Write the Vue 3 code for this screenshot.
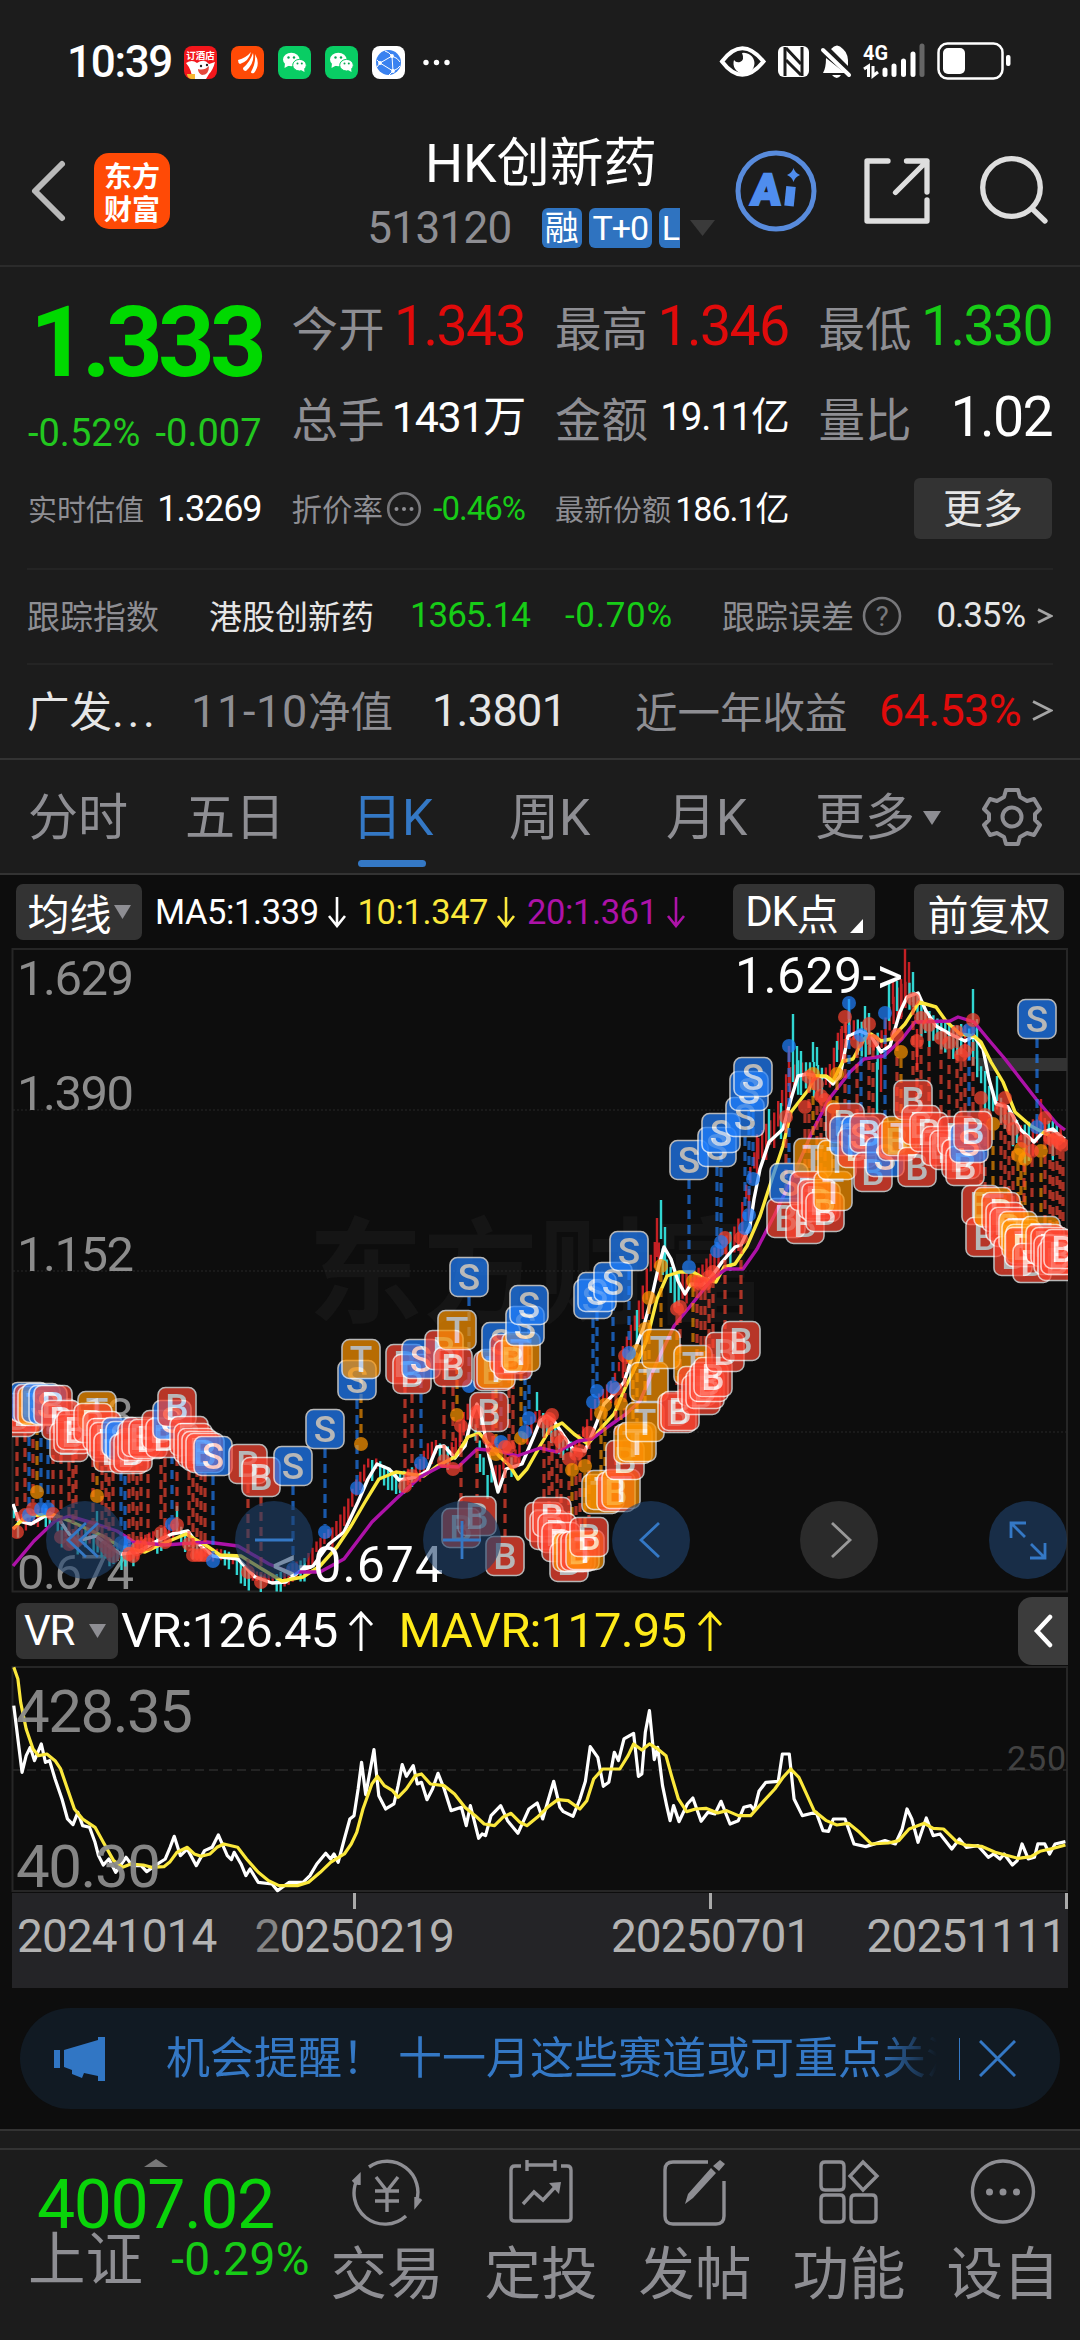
<template>
    <div class="quote-page">
        <!-- 系统状态栏 -->
        <div class="status-bar">
            <span class="clock num">10:39</span>
            <div class="app-icons">
                <svg viewBox="0 0 33 33">
                    <rect width="33" height="33" rx="8" fill="#f3161b" />
                    <path d="M2 17 Q8 13 13 17 Q20 12 25 18 L31 16 Q29 24 25 28 L22 33 H8 Q8 24 2 17" fill="#fff" />
                    <path d="M14 23 Q20 25 25 20 Q25 29 18 29 Q14 27 14 23" fill="#e5483c" />
                    <path d="M3 28 H11 V33 H7 Q3 32 3 28" fill="#f7b733" />
                    <circle cx="17" cy="20" r="1.2" fill="#222" />
                    <circle cx="23" cy="19" r="1.2" fill="#222" />
                    <text x="16.5" y="13" font-size="9.5" font-weight="700" text-anchor="middle" fill="#fff">订酒店</text>
                </svg>
                <svg viewBox="0 0 33 33">
                    <rect width="33" height="33" rx="8" fill="#ff4a06" />
                    <path d="M7 14 Q15 12 20 6 Q18 15 9 18 Q7 17 7 14 M12 22 Q19 16 22 7 Q24 17 15 25 Q12 25 12 22 M20 26 Q25 17 24 8 Q30 18 23 27 Q20 28 20 26" fill="#fff" />
                </svg>
                <svg v-for="n in 2" :key="n" viewBox="0 0 33 33">
                    <rect width="33" height="33" rx="8" fill="#09cd64" />
                    <ellipse cx="13.300" cy="13.500" rx="8.300" ry="6.800" fill="#fff" />
                    <path d="M7 17 L6.500 22 L12 19" fill="#fff" />
                    <ellipse cx="21.500" cy="19.200" rx="6.800" ry="5.800" fill="#fff" stroke="#09cd64" stroke-width="1" />
                    <path d="M23 24 L26.500 26 L26 22" fill="#fff" />
                    <g fill="#09a553">
                        <circle cx="10.500" cy="11.500" r="1.200" />
                        <circle cx="16" cy="11.500" r="1.200" />
                        <circle cx="19.500" cy="17.500" r="1" />
                        <circle cx="23.800" cy="17.500" r="1" />
                    </g>
                </svg>
                <svg viewBox="0 0 33 33">
                    <rect width="33" height="33" rx="8" fill="#fff" />
                    <circle cx="16.500" cy="16.500" r="12.500" fill="#3a82f0" />
                    <g stroke="#fff" stroke-width="1" fill="none">
                        <path d="M8 17 L20 10 L21 25 Z M20 10 Q17 6 13 5 M20 10 Q26 12 28 16 M21 25 Q26 23 28 20 M21 25 L17 29 M8 17 L5 14 M8 17 L5 21" />
                    </g>
                    <g fill="#fff">
                        <circle cx="8" cy="17" r="1.900" />
                        <circle cx="20" cy="10" r="1.900" />
                        <circle cx="21" cy="25" r="1.900" />
                    </g>
                </svg>
                <svg class="dots" viewBox="0 0 33 33" fill="#fff">
                    <circle cx="7" cy="16.500" r="2.700" />
                    <circle cx="17.500" cy="16.500" r="2.700" />
                    <circle cx="28" cy="16.500" r="2.700" />
                </svg>
            </div>
            <svg class="sys-icons" viewBox="715 40 300 44">
                <path d="M721 61.500 Q741 35 762.500 61.500 Q741 88 721 61.500 Z" fill="none" stroke="#fff" stroke-width="4" />
                <path d="M733 60 A10.500 10.500 0 1 0 741 53 Q744 60 739 62 Q735 63 733 60" fill="#fff" />
                <rect x="777" y="46" width="31" height="31" rx="6" fill="#fff" />
                <path d="M784 47 V76 M801 47 V76" stroke="#1c1c1c" stroke-width="3" />
                <path d="M785 48 L800 64 M785 60 L800 75" stroke="#1c1c1c" stroke-width="3" />
                <path d="M825 58 L844 73 H822 Q825 68 825 58 M830 49 Q836 42 842 49 Q848 54 847 66 Z" fill="#fff" />
                <path d="M822 50 L848 75" stroke="#fff" stroke-width="4" stroke-linecap="round" />
                <path d="M831 75 H840 Q836 81 831 75" fill="#fff" />
                <text class="svg-num" x="862" y="60" font-size="21" font-weight="700" textLength="25" lengthAdjust="spacingAndGlyphs" fill="#fff">4G</text>
                <path d="M863 69 L867.500 66 V77 M872 66 V76 L877 72" fill="none" stroke="#fff" stroke-width="3" />
                <g stroke-width="5" stroke-linecap="round" stroke="#fff">
                    <path d="M884 70 V74.500 M893 66 V74.500 M902.500 61 V74.500 M912 54 V74.500" />
                    <path d="M921 46 V74.500" stroke="#666" />
                </g>
                <rect x="937.500" y="43.500" width="64" height="35" rx="9" fill="none" stroke="#fff" stroke-width="2.500" />
                <rect x="942" y="48" width="22" height="26" rx="5" fill="#fff" />
                <rect x="1005" y="55" width="4.500" height="11" rx="2" fill="#fff" />
            </svg>
        </div>

        <!-- 标题栏 -->
        <header class="title-bar">
            <svg class="back" viewBox="0 0 44 68"><path d="M36 7 L9 34 L36 61" /></svg>
            <div class="logo"><span>东方</span><span>财富</span></div>
            <div class="title-box">
                <h1>HK创新药</h1>
                <div class="sub-title">
                    <span class="code num">513120</span>
                    <div class="tags">
                        <span class="tag tag-r">融</span>
                        <span class="tag tag-t num">T+0</span>
                        <span class="tag tag-l num">L</span>
                    </div>
                    <svg class="drop" viewBox="0 0 25 16"><path d="M0 0 H25 L12.500 16 Z" fill="#3a3a3a" /></svg>
                </div>
            </div>
            <svg class="head-icons" viewBox="730 145 330 92" fill="none" stroke-linecap="round">
                <circle cx="775" cy="191" r="38" stroke="#588bdc" stroke-width="5" />
                <text transform="translate(749 205) skewX(-5)" font-size="44" font-weight="900" class="ai-text">A</text>
                <path d="M790 186.500 L788 206" stroke="#4f8dee" stroke-width="9.500" stroke-linecap="butt" />
                <path d="M792.500 168 Q794 173 799 175 Q794 177 792.500 182 Q791 177 786 175 Q791 173 792.500 168" fill="#4f8dee" />
                <g stroke="#dedede" stroke-width="5.300" stroke-linejoin="round">
                    <path d="M887 161 H866 V221 H926 V200 M905.500 161 H926 V192 M926 161 L894.500 192.500" />
                    <circle cx="1010.500" cy="187.500" r="28.800" />
                    <path d="M1031.500 209 L1044 221" />
                </g>
            </svg>
        </header>

        <!-- 行情数据 -->
        <section class="quote">
            <div class="col col-main">
                <div class="price num">1.333</div>
                <div class="change num"><span>-0.52%</span><span>-0.007</span></div>
                <div class="cell small"><label>实时估值</label><b class="num">1.3269</b></div>
            </div>
            <div class="col">
                <div class="cell"><label>今开</label><b class="num red">1.343</b></div>
                <div class="cell"><label>总手</label><b class="num s42">1431万</b></div>
                <div class="cell small mid">
                    <label>折价率</label>
                    <svg class="hint" viewBox="0 0 36 36">
                        <circle cx="18" cy="18" r="15.800" />
                        <g class="solid"><circle cx="10.500" cy="18" r="2" /><circle cx="18" cy="18" r="2" /><circle cx="25.500" cy="18" r="2" /></g>
                    </svg>
                    <b class="num green s32">-0.46%</b>
                </div>
            </div>
            <div class="col">
                <div class="cell"><label>最高</label><b class="num red">1.346</b></div>
                <div class="cell"><label>金额</label><b class="num s38">19.11亿</b></div>
                <div class="cell small"><label>最新份额</label><b class="num s35">186.1亿</b></div>
            </div>
            <div class="col">
                <div class="cell"><label>最低</label><b class="num green">1.330</b></div>
                <div class="cell"><label>量比</label><b class="num">1.02</b></div>
                <div class="cell small end"><button class="more">更多</button></div>
            </div>
        </section>

        <div class="track-row">
            <label class="w182">跟踪指数</label>
            <span class="w201 light">港股创新药</span>
            <span class="w155 num green">1365.14</span>
            <span class="w157 num green wide">-0.70%</span>
            <label>跟踪误差</label>
            <svg class="hint big" viewBox="0 0 40 40">
                <circle cx="20" cy="20" r="18" />
                <text x="20" y="30" text-anchor="middle" class="svg-num">?</text>
            </svg>
            <span class="num light push">0.35%</span>
            <svg class="gt" viewBox="0 0 16 16"><path d="M1 1.500 L14 8 L1 14.500" /></svg>
        </div>
        <div class="track-row fund-row">
            <span class="w165 light">广发<i class="num ellipsis">...</i></span>
            <label class="w240"><i class="num">11-10</i>净值</label>
            <span class="w203 num light">1.3801</span>
            <label>近一年收益</label>
            <span class="num red push">64.53%</span>
            <svg class="gt" viewBox="0 0 20 20"><path d="M1 1.500 L18 10 L1 18.500" /></svg>
        </div>

        <!-- 周期切换 -->
        <nav class="tabs">
            <span v-for="tab in tabs" :key="tab" :class="['tab', { active: tab === activeTab }]" @click="activeTab = tab">{{ tab }}</span>
            <span class="tab tab-more">更多<svg viewBox="0 0 18 14"><path d="M0 0 H18 L9 14 Z" fill="#8e8e93" /></svg></span>
            <svg class="gear" viewBox="0 0 60 60">
                <path d="M24 3 H36 L38 10 L45 14 L52 12 L58 22 L53 27 V33 L58 38 L52 48 L45 46 L38 50 L36 57 H24 L22 50 L15 46 L8 48 L2 38 L7 33 V27 L2 22 L8 12 L15 14 L22 10 Z" />
                <circle cx="30" cy="30" r="9.500" />
            </svg>
        </nav>

        <!-- 均线 -->
        <div class="ma-bar">
            <button class="chip chip-ma">均线<svg viewBox="0 0 17 14"><path d="M0 0 H17 L8.500 14 Z" fill="#8e8e93" /></svg></button>
            <span v-for="m in maList" :key="m.text" class="ma num" :class="m.cls">{{ m.text }}<svg class="arrow" viewBox="0 0 20 32"><path d="M10 1 V30 M2 20 L10 30 L18 20" /></svg></span>
            <button class="chip chip-dk"><i class="num">DK</i>点<svg viewBox="0 0 13 14"><path d="M13 0 V14 H0 Z" fill="#fff" /></svg></button>
            <button class="chip chip-fq">前复权</button>
        </div>

        <!-- K线图 -->
        <svg class="k-chart" viewBox="0 948 1080 648">
            <defs>
                <clipPath id="plot"><rect x="12" y="950" width="1056" height="643" /></clipPath>
            </defs>
            <text x="308" y="1315" class="watermark" textLength="460">东方财富</text>
            <path d="M12.500 1592.500 V950 H1067 V1592.500 Z" fill="none" stroke="#262626" stroke-width="2" />
            <path d="M13 1111 H1067 M13 1272 H1067 M13 1433 H1067" stroke="#292929" stroke-dasharray="2 2" />
            <g class="axis svg-num">
                <text v-for="a in axis" :key="a.t" x="17" :y="a.y" textLength="117">{{ a.t }}</text>
            </g>
            <rect x="977" y="1059" width="90" height="13" fill="#333" />
            <g clip-path="url(#plot)">
                <path :d="bars.up" stroke="#c32024" stroke-width="2.400" />
                <path :d="bars.down" stroke="#31d6d2" stroke-width="2.400" />
                <g fill="none" stroke-width="3.400" stroke-linejoin="round">
                    <polyline :points="ma5" stroke="#fff" />
                    <polyline :points="ma10" stroke="#fbe83c" />
                    <polyline :points="ma20" stroke="#ad12a8" />
                </g>
                <g class="sticks">
                    <path v-for="(s, i) in signals" :key="i" :d="`M${s.x} ${s.from} V${s.to}`" :stroke="colors[s.k]" />
                </g>
                <circle v-for="(s, i) in signals" :key="'c' + i" :cx="s.x" :cy="s.dot" r="7" :fill="colors[s.k]" opacity="0.700" />
                <g v-for="(s, i) in signals" :key="'m' + i" class="mark" :transform="`translate(${s.x} ${s.y})`">
                    <rect x="-19" y="-19.500" width="38" height="39" rx="7.500" :fill="colors[s.k]" />
                    <text y="13" text-anchor="middle">{{ s.k }}</text>
                </g>
            </g>
            <text x="735" y="994" class="peak svg-num" textLength="168">1.629-&gt;</text>
            <text x="272" y="1583" class="peak svg-num" textLength="171">&lt;-0.674</text>
            <g v-for="b in tools" :key="b.x" :transform="`translate(${b.x} 1541)`">
                <circle r="39" :fill="b.gray ? '#2b2b2b' : 'rgba(31, 66, 110, 0.6)'" />
                <path :d="b.d" fill="none" :stroke="b.gray ? '#999' : '#3478c5'" stroke-width="2.800" />
            </g>
        </svg>

        <!-- VR指标 -->
        <div class="vr-bar">
            <button class="chip chip-vr num">VR<svg viewBox="0 0 17 14"><path d="M0 0 H17 L8.500 14 Z" fill="#8e8e93" /></svg></button>
            <span class="vr num">VR:126.45<svg class="arrow" viewBox="0 0 26 42"><path d="M13 41 V3 M2 15 L13 3 L24 15" /></svg></span>
            <span class="vr mavr num">MAVR:117.95<svg class="arrow" viewBox="0 0 26 42"><path d="M13 41 V3 M2 15 L13 3 L24 15" /></svg></span>
            <button class="fold"><svg viewBox="0 0 20 34"><path d="M17 3 L4 17 L17 31" /></svg></button>
        </div>
        <svg class="vr-chart" viewBox="0 1667 1080 227">
            <path d="M12.500 1668 H1067 V1892 H12.500 Z" fill="none" stroke="#262626" stroke-width="2" />
            <path d="M13 1771 H1067" stroke="#2b2b2b" stroke-width="1.500" stroke-dasharray="9 5" />
            <text x="1007" y="1771" class="svg-num" font-size="34" fill="#424242" textLength="59">250</text>
            <g transform="translate(0 1590) scale(0.6887 0.3333)" fill="none" stroke-width="3.200" stroke-linejoin="round">
                <polyline :points="vrLine" stroke="#fff" vector-effect="non-scaling-stroke" />
                <polyline :points="mavrLine" stroke="#fbe83c" vector-effect="non-scaling-stroke" />
            </g>
            <g class="svg-num" font-size="60" fill="#8c8c8c" opacity="0.950">
                <text x="16" y="1733" textLength="177">428.35</text>
                <text x="16" y="1888" textLength="145">40.30</text>
            </g>
        </svg>
        <div class="dates num">
            <i class="tick t1"></i><i class="tick t2"></i><i class="tick t3"></i>
            <span>20241014</span><span class="d2"><em>2</em>0250219</span><span class="d3">20250701</span><span class="d4">20251111</span>
        </div>

        <!-- 消息提醒 -->
        <div class="notice">
            <svg class="horn" viewBox="0 0 52 46"><path d="M0 14 H6 V32 H0 Z M10 14 L44 4 V1 H51 V45 H44 V40 L30 37 L28 42 L18 38 V34 L10 31 Z" /></svg>
            <p>机会提醒！<span>十一月这些赛道或可重点关注</span></p>
            <i class="bar"></i>
            <svg class="close" viewBox="0 0 38 38"><path d="M1 1 L37 37 M37 1 L1 37" /></svg>
        </div>

        <div class="gap-bar"></div>

        <!-- 底部操作栏 -->
        <footer class="bottom-bar">
            <div class="index">
                <svg class="up" viewBox="0 0 24 8"><path d="M0 8 L12 0 L24 8 Z" fill="#777" /></svg>
                <div class="index-value num">4007.02</div>
                <div class="index-row"><span>上证</span><b class="num">-0.29%</b></div>
            </div>
            <div v-for="item in actions" :key="item.name" class="action">
                <svg viewBox="0 0 72 72"><path :d="item.d" /><path v-if="item.fill" class="solid" :d="item.fill" /></svg>
                <span>{{ item.name }}</span>
            </div>
        </footer>
    </div>
</template>

<script setup>
import { ref } from 'vue';

const tabs = ['分时', '五日', '日K', '周K', '月K'];
const activeTab = ref('日K');

const maList = [
    { text: 'MA5:1.339', cls: 'm5' },
    { text: '10:1.347', cls: 'm10' },
    { text: '20:1.361', cls: 'm20' }
];

const axis = [
    { t: '1.629', y: 996 },
    { t: '1.390', y: 1111 },
    { t: '1.152', y: 1272 },
    { t: '0.913', y: 1433 },
    { t: '0.674', y: 1590 }
];

// 买卖点颜色
const colors = { B: '#ff4632', S: '#2080ff', T: '#ff9500' };

// 均线坐标
const ma5 = '13,1505 19,1522 31,1525 45,1517 57,1517 69,1535 77,1542 96,1537 110,1548 121,1555 138,1553 155,1543 172,1535 188,1532 196,1543 213,1557 238,1560 255,1578 272,1584 286,1583 300,1572 313,1567 329,1545 344,1533 358,1503 368,1480 377,1465 389,1470 399,1481 417,1478 427,1472 437,1448 444,1447 455,1459 465,1447 472,1417 477,1405 482,1420 489,1457 498,1493 506,1470 522,1465 534,1437 540,1422 547,1417 554,1422 564,1437 573,1450 585,1452 595,1428 604,1405 614,1395 624,1383 633,1355 643,1330 652,1297 658,1270 664,1248 671,1260 678,1282 685,1295 691,1285 702,1286 712,1277 722,1263 735,1248 741,1246 750,1227 754,1200 760,1170 769,1143 783,1130 791,1100 798,1077 807,1075 816,1077 826,1078 833,1085 840,1077 848,1037 860,1032 871,1037 881,1053 890,1047 900,1013 907,998 918,994 926,1012 936,1027 950,1035 965,1042 974,1037 983,1050 989,1080 996,1105 1008,1108 1020,1130 1034,1143 1043,1133 1053,1130 1060,1137 1065,1140';
const ma10 = '13,1530 26,1517 52,1515 72,1523 103,1537 121,1548 145,1553 162,1545 186,1535 207,1547 220,1556 241,1557 262,1570 282,1582 303,1578 320,1567 337,1548 351,1527 365,1503 379,1480 396,1473 410,1475 424,1477 437,1467 455,1458 468,1438 479,1434 489,1445 499,1457 510,1467 518,1480 527,1470 540,1447 550,1430 562,1424 574,1435 588,1445 602,1428 614,1415 626,1387 636,1367 647,1340 657,1300 667,1277 679,1273 693,1273 705,1280 716,1283 724,1268 735,1265 747,1247 760,1217 772,1180 783,1147 791,1113 809,1090 815,1077 826,1077 833,1082 843,1062 853,1060 864,1040 871,1035 881,1042 891,1040 905,1025 919,1003 936,1008 946,1022 960,1035 974,1037 981,1043 991,1063 1003,1083 1015,1113 1031,1127 1046,1135 1065,1142';
const ma20 = '13,1567 34,1542 55,1522 69,1517 96,1525 117,1532 134,1543 165,1546 207,1543 238,1547 269,1565 289,1573 320,1573 344,1560 372,1523 396,1500 420,1478 441,1467 458,1468 477,1450 499,1452 517,1457 540,1449 557,1453 578,1442 592,1440 609,1427 626,1415 640,1402 657,1363 674,1327 692,1305 712,1280 726,1270 743,1270 757,1250 774,1217 795,1173 812,1133 829,1100 850,1073 864,1060 884,1057 902,1040 915,1023 950,1022 958,1018 974,1023 988,1040 1005,1060 1036,1100 1057,1125 1065,1131';

// 类型 x 标记y 圆点y
const signals = `
B 17 1418 1533|B 25 1414 1516|S 29 1403 1516|B 33 1405 1510|T 37 1407 1493|S 41 1404 1510|S 48 1406 1510|B 53 1406 1515
B 61 1421 1538|B 69 1443 1545|B 73 1435 1543|B 76 1431 1542|T 97 1412 1497|B 93 1424 1528|B 102 1432 1542|B 106 1439 1548
B 109 1443 1552|B 113 1453 1557|S 121 1438 1544|S 125 1442 1546|B 129 1455 1555|B 133 1453 1557|B 137 1442 1550|B 141 1438 1547
B 148 1440 1545|B 161 1431 1534|B 165 1439 1543|S 172 1421 1525|B 177 1408 1526|B 189 1437 1545|B 193 1444 1556|B 197 1449 1556
B 201 1452 1556|B 205 1454 1556|S 213 1457 1562|B 248 1465 1573|B 261 1478 1583|S 293 1467 1570|S 325 1430 1533|S 357 1381 1489
T 361 1360 1445|B 405 1365 1487|B 412 1375 1477|S 421 1360 1464|B 444 1351 1462|B 453 1368 1470|T 457 1331 1416|S 469 1278 1387
B 489 1413 1440|B 493 1372 1450|T 496 1370 1455|S 501 1343 1443|B 509 1355 1448|B 513 1361 1463|T 521 1353 1439|S 525 1327 1433
S 529 1306 1419|B 461 1529 1427|B 477 1517 1413|B 505 1557 1448|B 544 1523 1423|B 549 1531 1420|B 552 1518 1416|B 557 1534 1438
B 561 1543 1443|B 569 1563 1460|T 572 1553 1471|B 576 1553 1455|B 580 1552 1452|T 585 1551 1467|B 589 1538 1434|T 601 1495 1414
T 605 1491 1406|B 616 1493 1390|T 621 1490 1405|B 625 1461 1357|T 633 1445 1359|T 637 1443 1352|T 645 1423 1330|T 649 1383 1299
T 661 1350 1267|B 677 1414 1310|B 680 1412 1308|T 693 1366 1282|B 697 1387 1283|B 701 1396 1285|B 705 1390 1285|B 709 1383 1278
B 713 1378 1273|B 725 1353 1239|B 741 1342 1239|S 593 1300 1403|S 597 1293 1392|S 613 1283 1388|S 629 1252 1354|S 689 1161 1268
S 717 1148 1252|S 721 1134 1243|S 745 1118 1229|S 749 1092 1216|S 753 1078 1180|B 786 1219 1118|S 789 1184 1047|B 805 1225 1108
T 813 1159 1075|B 809 1192 1078|B 817 1200 1085|B 821 1203 1097|B 825 1213 1101|T 833 1192 1108|T 837 1161 1075|B 845 1124 1018
S 849 1137 1004|B 857 1149 1043|S 861 1137 1036|B 869 1134 1025|B 873 1173 1042|S 885 1158 1014|B 897 1142 1036|T 901 1137 1053
B 913 1101 1000|B 917 1168 1042|B 921 1126 1019|B 929 1133 1026|B 941 1147 1039|B 949 1151 1044|B 957 1137 1033|B 961 1160 1056
B 965 1167 1052|S 969 1144 1031|B 973 1132 1021|B 981 1206 1099|B 985 1238 1116|T 993 1208 1125|B 1001 1213 1110|B 1005 1223 1099
B 1009 1228 1120|B 1013 1257 1130|T 1018 1232 1156|T 1021 1240 1150|T 1025 1245 1160|B 1024 1248 1142|T 1041 1237 1152|B 1032 1264 1152
B 1045 1245 1119|B 1050 1248 1139|B 1053 1256 1141|B 1057 1262 1140|B 1060 1256 1144|B 1063 1250 1146|S 1037 1020 1128
`.trim().split(/[|\n]/).map((row) => {
    const [k, x, y, dot] = row.split(' ');
    const above = +y < +dot;
    return { k, x: +x, y: +y, dot: +dot, from: above ? +y + 20 : +dot + 7, to: above ? +dot - 7 : +y - 20 };
});

// 高低线
const spikes = [
    ['down', 97, 1512, 1536], ['down', 177, 1507, 1535], ['down', 480, 1455, 1473], ['down', 537, 1393, 1412],
    ['down', 637, 1311, 1345], ['down', 661, 1201, 1240], ['up', 657, 1219, 1258], ['down', 665, 1228, 1262],
    ['up', 749, 1190, 1222], ['up', 757, 1135, 1175], ['down', 769, 1110, 1146], ['down', 781, 1104, 1140],
    ['up', 789, 1047, 1087], ['down', 793, 1015, 1083], ['down', 797, 1047, 1085], ['down', 801, 1052, 1096],
    ['down', 813, 1043, 1063], ['down', 817, 1048, 1067], ['down', 837, 1042, 1063], ['up', 841, 1030, 1068],
    ['down', 849, 1000, 1037], ['down', 865, 1007, 1036], ['down', 869, 1014, 1045], ['down', 877, 1063, 1115],
    ['up', 881, 1055, 1093], ['down', 889, 983, 1022], ['up', 893, 983, 1005], ['down', 897, 982, 1012],
    ['up', 901, 980, 1020], ['up', 905, 950, 1005], ['up', 909, 963, 1000], ['down', 913, 973, 1003],
    ['up', 917, 1030, 1071], ['down', 973, 990, 1025], ['down', 977, 1020, 1060], ['down', 985, 1072, 1112],
    ['down', 997, 1077, 1102], ['up', 1041, 1100, 1132]
];

const points = ma5.split(' ').map((p) => p.split(',').map(Number));
const priceAt = (x) => {
    const i = Math.max(1, points.findIndex((p) => p[0] >= x));
    const [a, b] = [points[i - 1], points[i]];
    return a[1] + ((b[1] - a[1]) * (x - a[0])) / (b[0] - a[0]);
};

const bars = { up: '', down: '' };
for (let i = 0; i < 264; i++) {
    const x = 14 + i * 3.98;
    const slope = priceAt(Math.min(x + 10, 1064)) - priceAt(x);
    const rnd = Math.abs(Math.sin(i * 12.9898) * 43758.5453) % 1;
    const size = (x > 620 ? 7 : 4) + rnd * (x > 620 ? 13 : 8);
    const mid = priceAt(x) + slope * 0.8 + (rnd - 0.5) * 10;
    const kind = slope + (rnd - 0.5) * 22 < 0 ? 'up' : 'down';
    bars[kind] += `M${x.toFixed(1)} ${(mid - size).toFixed(1)}V${(mid + size).toFixed(1)}`;
}
spikes.forEach(([kind, x, top, bottom]) => {
    bars[kind] += `M${x} ${top}V${bottom}`;
});

const tools = [
    { x: 85, d: 'M1 -17 L-17 0 L1 17 M13 -17 L-5 0 L13 17' },
    { x: 274, d: 'M-19 0 H19' },
    { x: 462, d: 'M-19 0 H19 M0 -19 V19' },
    { x: 651, d: 'M8 -17 L-10 0 L8 17' },
    { x: 839, gray: true, d: 'M-7 -17 L11 0 L-7 17' },
    { x: 1028, d: 'M-17 -2 V-17 H-2 M-17 -17 L-3 -3 M17 3 V18 H2 M17 18 L3 4' }
];

const vrLine = '20,350 26,450 32,550 38,500 44,475 50,515 60,465 66,520 72,515 80,570 90,630 98,690 106,707 113,670 120,710 130,715 138,760 143,800 150,828 158,810 168,850 183,805 192,830 205,830 213,848 225,830 240,810 247,775 253,742 262,800 272,780 285,830 297,785 308,775 317,738 330,800 336,812 340,790 350,825 357,860 363,840 375,880 395,885 403,905 420,880 440,880 450,860 460,825 473,793 480,810 485,795 491,820 500,750 508,690 514,680 520,600 525,520 531,617 543,482 550,620 560,660 572,645 578,590 584,527 590,562 600,530 606,585 612,580 620,632 628,600 636,553 645,600 655,665 670,655 677,710 683,650 695,748 700,735 705,740 713,680 727,650 737,695 752,733 768,660 780,642 788,690 804,577 813,655 818,668 832,682 842,630 850,577 857,473 868,505 876,592 884,580 892,490 898,515 906,450 920,433 927,562 932,555 937,430 943,365 950,512 955,475 962,590 968,650 973,695 978,650 986,698 998,645 1006,627 1018,697 1028,670 1038,675 1047,637 1060,705 1072,695 1080,655 1090,650 1095,665 1102,607 1112,580 1130,577 1136,495 1146,495 1153,630 1165,680 1185,670 1195,725 1203,727 1210,690 1227,690 1240,765 1257,773 1285,755 1300,765 1310,720 1317,660 1324,690 1333,760 1345,687 1355,740 1365,735 1382,780 1393,750 1403,775 1420,770 1435,805 1443,795 1452,810 1458,795 1470,828 1477,815 1484,765 1493,810 1502,805 1507,765 1517,765 1524,795 1532,765 1547,758';
const mavrLine = '20,235 26,270 30,340 38,420 48,480 56,500 68,495 80,515 88,540 98,600 108,660 120,690 138,715 150,760 165,815 178,835 190,825 208,828 220,835 238,833 247,818 257,790 272,775 282,795 292,802 305,795 315,775 325,765 345,775 358,810 375,850 390,875 405,890 432,890 448,880 465,850 480,820 500,795 510,765 518,730 527,660 540,585 548,562 558,590 570,605 578,625 590,600 603,560 612,555 625,585 645,590 660,615 675,655 690,680 703,705 718,710 730,685 742,673 755,700 765,710 780,685 795,655 810,632 825,635 842,660 852,635 862,570 875,540 900,540 912,500 920,465 932,483 943,465 955,480 967,500 975,560 985,630 997,668 1010,660 1025,658 1042,672 1055,665 1072,680 1090,680 1105,645 1125,600 1137,565 1148,540 1160,565 1170,610 1182,665 1200,695 1215,708 1232,703 1248,730 1265,765 1290,762 1305,755 1320,720 1342,703 1355,718 1370,720 1390,760 1402,768 1425,772 1445,790 1478,808 1497,803 1510,787 1530,778 1547,768';

const actions = [
    {
        name: '交易',
        d: 'M18 11 A31 31 0 0 1 65 47 M70 43 L65 49 V41 M55 60 A31 31 0 0 1 7 22 M2 26 L8 20 V29 M25 21 L36 35 L47 21 M24 35 H48 M24 45 H48 M36 35 V56'
    },
    {
        name: '定投',
        d: 'M16 10 H10 Q6 10 6 14 V62 Q6 65 10 65 H62 Q66 65 66 62 V14 Q66 10 62 10 H56 M22 4 V15 M50 4 V15 M22 9 H50 M18 48 L29 36 L38 44 L51 30',
        fill: 'M44 27 L56 26 L54 38 Z'
    },
    {
        name: '发帖',
        d: 'M49 6 H14 Q6 6 6 14 V60 Q6 68 14 68 H57 Q65 68 65 60 V25',
        fill: 'M26 48 L29 38 L52 12 L57 17 L34 42 Z M54 10 L61 4 L66 8 L60 15 Z'
    },
    {
        name: '功能',
        d: 'M12 6 H27 Q31 6 31 10 V30 Q31 34 27 34 H12 Q8 34 8 30 V10 Q8 6 12 6 M50 6 L64 20 L50 34 L37 20 Z M12 39 H27 Q31 39 31 43 V62 Q31 66 27 66 H12 Q8 66 8 62 V43 Q8 39 12 39 M42 39 H59 Q63 39 63 43 V62 Q63 66 59 66 H42 Q38 66 38 62 V43 Q38 39 42 39'
    },
    {
        name: '设自',
        d: 'M36 5 A30.500 30.500 0 1 1 35.900 5 Z',
        fill: 'M19 36 a3.500 3.500 0 1 1 7 0 a3.500 3.500 0 1 1 -7 0 M32.500 36 a3.500 3.500 0 1 1 7 0 a3.500 3.500 0 1 1 -7 0 M46 36 a3.500 3.500 0 1 1 7 0 a3.500 3.500 0 1 1 -7 0'
    }
];
</script>

<style>
body {
    margin: 0;
    background: #1c1c1c;
}
</style>

<style scoped>
.quote-page {
    width: 1080px;
    height: 2340px;
    overflow: hidden;
    display: flex;
    flex-direction: column;
    background: #1c1c1c;
    color: #fff;
    font-family: 'Noto Sans CJK SC', sans-serif;
    line-height: 1;
    white-space: nowrap;
}

.quote-page * {
    box-sizing: border-box;
}

.quote-page > * {
    flex-shrink: 0;
}

svg {
    display: block;
    flex-shrink: 0;
}

button {
    border: none;
    padding: 0;
    font: inherit;
    color: inherit;
}

i,
em {
    font-style: normal;
}

.num,
.svg-num {
    font-family: Roboto, 'Noto Sans CJK SC', sans-serif;
}

.num {
    letter-spacing: -0.03em;
}

.red {
    color: #e00b0b;
}

.green {
    color: #17cc17;
}

.light {
    color: #e6e6e6;
}

/* 状态栏 */
.status-bar {
    height: 124px;
    display: flex;
    align-items: center;
    padding: 0 64px 0 67px;
}

.clock {
    width: 117px;
    font-size: 44px;
    font-weight: 500;
}

.app-icons {
    display: flex;
    gap: 14px;
    flex: 1;
}

.app-icons svg {
    width: 33px;
    height: 33px;
}

.sys-icons {
    width: 300px;
    height: 44px;
}

/* 标题栏 */
.title-bar {
    height: 143px;
    display: flex;
    align-items: center;
    border-bottom: 2px solid #2b2b2b;
    padding: 0 19px 7px 26px;
}

.back {
    width: 44px;
    height: 68px;
    margin-right: 24px;
}

.back path {
    fill: none;
    stroke: #b9b9b9;
    stroke-width: 6;
    stroke-linecap: round;
    stroke-linejoin: round;
}

.logo {
    width: 76px;
    height: 76px;
    border-radius: 15px;
    background: #ff4a06;
    display: flex;
    flex-direction: column;
    align-items: center;
    justify-content: center;
    gap: 3px;
    font-size: 28px;
    line-height: 30px;
    font-weight: 700;
}

.title-box {
    flex: 1;
    display: flex;
    flex-direction: column;
    align-items: center;
    gap: 14px;
    padding-left: 181px;
}

h1 {
    margin: 0;
    font-size: 53.5px;
    line-height: 60px;
    font-weight: 400;
    font-family: Roboto, 'Noto Sans CJK SC', sans-serif;
}

.sub-title {
    display: flex;
    align-items: center;
    height: 40px;
}

.code {
    font-size: 44px;
    letter-spacing: -0.015em;
    color: #8e8e93;
    margin-right: 30px;
}

.tags {
    display: flex;
    gap: 7px;
    width: 138px;
    overflow: hidden;
}

.tag {
    height: 40px;
    line-height: 40px;
    border-radius: 6px;
    background: #2f73c0;
    text-align: center;
    font-size: 34px;
    flex-shrink: 0;
}

.tag-r {
    width: 40px;
    line-height: 36px;
}

.tag-t {
    width: 63px;
}

.tag-l {
    width: 40px;
    text-align: left;
    padding-left: 3px;
}

.drop {
    width: 25px;
    height: 16px;
    margin-left: 10px;
}

.head-icons {
    width: 330px;
    height: 92px;
}

.ai-text {
    font-family: Roboto, sans-serif;
    fill: #4f8dee;
    stroke: #4f8dee;
    stroke-width: 2;
}

/* 行情 */
.quote {
    height: 301px;
    padding: 14px 28px 0 28px;
    display: grid;
    grid-template-columns: repeat(4, 1fr);
    column-gap: 30px;
}

.col {
    display: flex;
    flex-direction: column;
    min-width: 0;
}

.cell {
    height: 91px;
    display: flex;
    align-items: center;
    justify-content: space-between;
}

.cell label {
    font-size: 46.5px;
    color: #8e8e93;
}

.cell b {
    font-weight: 400;
    font-size: 55.5px;
}

.cell .s42 {
    font-size: 43px;
}

.cell .s38 {
    font-size: 38.5px;
}

.cell.small label {
    font-size: 29px;
}

.cell.small.mid label {
    font-size: 30.5px;
}

.cell.small b {
    font-size: 36px;
}

.cell.small .s32 {
    font-size: 33px;
}

.cell.small .s35 {
    font-size: 34px;
}

.cell.end {
    justify-content: flex-end;
}

.price {
    height: 122px;
    line-height: 122px;
    font-size: 99px;
    font-weight: 700;
    color: #00d900;
    letter-spacing: -0.048em;
    padding: 0 0 0 2px;
}

.change {
    height: 60px;
    display: flex;
    justify-content: space-between;
    align-items: center;
    font-size: 38px;
    letter-spacing: 0;
    color: #22c81f;
}

.hint {
    width: 36px;
    height: 36px;
    fill: none;
    stroke: #77777a;
    stroke-width: 2.6;
    margin-right: 8px;
}

.hint .solid {
    fill: #8e8e93;
    stroke: none;
}

.more {
    width: 138px;
    height: 61px;
    border-radius: 6px;
    background: #333;
    color: #e6e6e6;
    font-size: 40px;
    line-height: 56px;
    padding-bottom: 5px;
}

/* 跟踪指数 */
.track-row {
    height: 95px;
    margin: 0 27px;
    border-top: 2px solid #242424;
    display: flex;
    align-items: center;
    padding-bottom: 2px;
    font-size: 33px;
}

.track-row label {
    color: #8e8e93;
}

.track-row > span.num {
    font-size: 35px;
}

.track-row > span.wide {
    letter-spacing: 0.02em;
}

.hint.big {
    width: 40px;
    height: 40px;
    margin-left: 8px;
}

.hint.big text {
    font-size: 28px;
    fill: #77777a;
    stroke: none;
}

.push {
    margin-left: auto;
}

.gt {
    width: 16px;
    height: 16px;
    margin-left: 12px;
    fill: none;
    stroke: #a5a5a5;
    stroke-width: 2.6;
}

.w182 { width: 182px; }
.w201 { width: 201px; }
.w155 { width: 155px; }
.w157 { width: 157px; }
.w165 { width: 164px; }
.w240 { width: 241px; }
.w203 { width: 203px; }

.fund-row {
    font-size: 42.5px;
}

.fund-row > span.num {
    font-size: 45px;
    letter-spacing: -0.015em;
}

.fund-row label i {
    font-size: 45px;
    letter-spacing: 0.015em;
}

.fund-row .ellipsis {
    font-size: 45px;
    letter-spacing: 0.08em;
}

.fund-row .gt {
    width: 21px;
    height: 21px;
    margin-left: 11px;
}

/* 周期 */
.tabs {
    height: 117px;
    border-top: 2px solid #333;
    border-bottom: 2px solid #333;
    display: flex;
    align-items: center;
    padding: 0 38px 0 28px;
    font-size: 50px;
    color: #8e8e93;
}

.tab {
    position: relative;
    width: 157px;
    padding-top: 2px;
    font-family: Roboto, 'Noto Sans CJK SC', sans-serif;
}

.tab:nth-child(2) {
    width: 167px;
}

.tab:nth-child(5) {
    width: 149px;
}

.tab.active {
    color: #3478c5;
}

.tab.active::after {
    content: '';
    position: absolute;
    left: 6px;
    bottom: -24px;
    width: 68px;
    height: 7px;
    border-radius: 4px;
    background: #3478c5;
}

.tab.tab-more {
    display: flex;
    align-items: center;
    gap: 8px;
    width: auto;
}

.tab-more svg {
    width: 18px;
    height: 14px;
}

.gear {
    width: 60px;
    height: 60px;
    margin-left: auto;
    fill: none;
    stroke: #8e8e93;
    stroke-width: 4;
    stroke-linejoin: round;
}

/* 均线栏 */
.ma-bar {
    height: 72px;
    background: #0d0d0d;
    display: flex;
    align-items: center;
    padding: 2px 16px 0;
}

.chip {
    height: 56px;
    border-radius: 7px;
    background: #333;
    display: flex;
    align-items: center;
    justify-content: center;
    font-size: 42px;
}

.chip svg {
    width: 17px;
    height: 14px;
}

.chip-ma {
    width: 126px;
    gap: 2px;
    margin-right: 13px;
}

.chip-dk {
    width: 142px;
    margin-left: auto;
    margin-right: 39px;
}

.chip-dk svg {
    width: 13px;
    margin: 28px 0 0 11px;
}

.chip-fq {
    width: 150px;
    font-size: 41px;
}

.ma {
    display: flex;
    align-items: center;
    font-size: 34.5px;
    gap: 8px;
    letter-spacing: -0.012em;
    margin-right: 11px;
}

.arrow {
    fill: none;
    stroke: currentColor;
    stroke-width: 2.6;
}

.ma .arrow {
    width: 20px;
    height: 32px;
}

.m10 {
    color: #fbe83c;
}

.m20 {
    color: #ad12a8;
}

/* K线 */
.k-chart,
.vr-chart {
    width: 1080px;
    background: #0d0d0d;
}

.k-chart {
    height: 648px;
}

.vr-chart {
    height: 227px;
}

.watermark {
    font-size: 115px;
    font-weight: 700;
    fill: #151515;
}

.axis {
    font-size: 49px;
    fill: #8c8c8c;
}

.peak {
    font-size: 50px;
    fill: #fff;
}

.sticks path {
    stroke-width: 3.2;
    stroke-dasharray: 9 6;
    opacity: 0.65;
}

.mark {
    opacity: 0.7;
}

.mark rect {
    stroke: #fff;
    stroke-width: 1.6;
}

.mark text {
    font-family: Roboto, sans-serif;
    font-size: 37px;
    font-weight: 500;
    fill: #fff;
}

/* VR */
.vr-bar {
    height: 71px;
    background: #0d0d0d;
    display: flex;
    align-items: center;
    padding: 0 12px 0 16px;
}

.chip-vr {
    width: 102px;
    margin-right: 3px;
    gap: 15px;
    padding-right: 4px;
}

.vr {
    display: flex;
    align-items: center;
    gap: 11px;
    font-size: 49px;
    letter-spacing: -0.017em;
    margin-right: 24px;
}

.vr .arrow {
    width: 26px;
    height: 42px;
    stroke-width: 3;
}

.mavr {
    color: #ffeb1a;
}

.fold {
    width: 50px;
    height: 68px;
    margin-left: auto;
    border-radius: 14px 0 0 14px;
    background: #3c3c3c;
    display: flex;
    align-items: center;
    justify-content: center;
}

.fold svg {
    width: 20px;
    height: 34px;
    fill: none;
    stroke: #fff;
    stroke-width: 4.5;
    stroke-linecap: round;
}

.dates {
    position: relative;
    height: 95px;
    border: solid #0d0d0d;
    border-width: 0 12px;
    background: #242427;
    display: flex;
    padding: 20px 2px 0 5px;
    font-size: 46px;
    line-height: 46px;
    color: #b3b3b3;
    letter-spacing: -0.02em;
}

.d2 { margin-left: 38px; }
.d3 { margin-left: 157px; }
.d4 { margin-left: auto; }

.d2 em {
    color: #858585;
}

.tick {
    position: absolute;
    top: 0;
    width: 3px;
    height: 16px;
    background: #aaa;
}

.t1 { left: 341px; }
.t2 { left: 697px; }
.t3 { right: 0; }

/* 提醒 */
.notice {
    height: 141px;
    border: 20px solid #0d0d0d;
    background: #0d0d0d;
    display: flex;
    align-items: center;
    padding: 0 44px 0 34px;
    position: relative;
    z-index: 0;
    color: #3478c5;
}

.notice::before {
    content: '';
    position: absolute;
    inset: 0;
    z-index: -1;
    border-radius: 51px;
    background: #111a23;
}

.horn {
    width: 52px;
    height: 46px;
    fill: #3176c4;
    margin-right: 60px;
}

.notice p {
    margin: 0;
    flex: 1;
    overflow: hidden;
    font-size: 44px;
    line-height: 60px;
    padding-bottom: 7px;
    mask-image: linear-gradient(90deg, #000 91%, transparent 99%);
}

.notice p span {
    margin-left: 12px;
}

.bar {
    width: 1px;
    height: 42px;
    background: #3478c5;
    margin: 0 19px 0 14px;
}

.close {
    width: 37px;
    height: 37px;
    stroke: #3478c5;
    stroke-width: 3;
}

.gap-bar {
    height: 19px;
    border-top: 2px solid #333;
}

/* 底部 */
.bottom-bar {
    flex: 1;
    border-top: 2px solid #333;
    display: flex;
}

.index {
    width: 310px;
}

.up {
    width: 24px;
    height: 8px;
    margin: 9px 0 0 144px;
}

.index-value {
    font-size: 68px;
    line-height: 68px;
    margin: 4px 0 0 37px;
    letter-spacing: -0.022em;
    color: #0ad40a;
}

.index-row {
    display: flex;
    align-items: center;
    justify-content: space-between;
    padding-left: 28px;
    margin-top: -12px;
    font-size: 57.5px;
    color: #8e8e93;
}

.index-row b {
    font-size: 46px;
    font-weight: 400;
    letter-spacing: 0.01em;
    padding-top: 6px;
    color: #17cc17;
}

.action {
    flex: 1;
    display: flex;
    flex-direction: column;
    align-items: center;
    font-size: 56.5px;
    color: #8e8e93;
}

.action svg {
    width: 72px;
    height: 72px;
    margin: 6px 0 13px;
    fill: none;
    stroke: #8e8e93;
    stroke-width: 3.4;
}

.action .solid {
    fill: #8e8e93;
    stroke: none;
}
</style>
